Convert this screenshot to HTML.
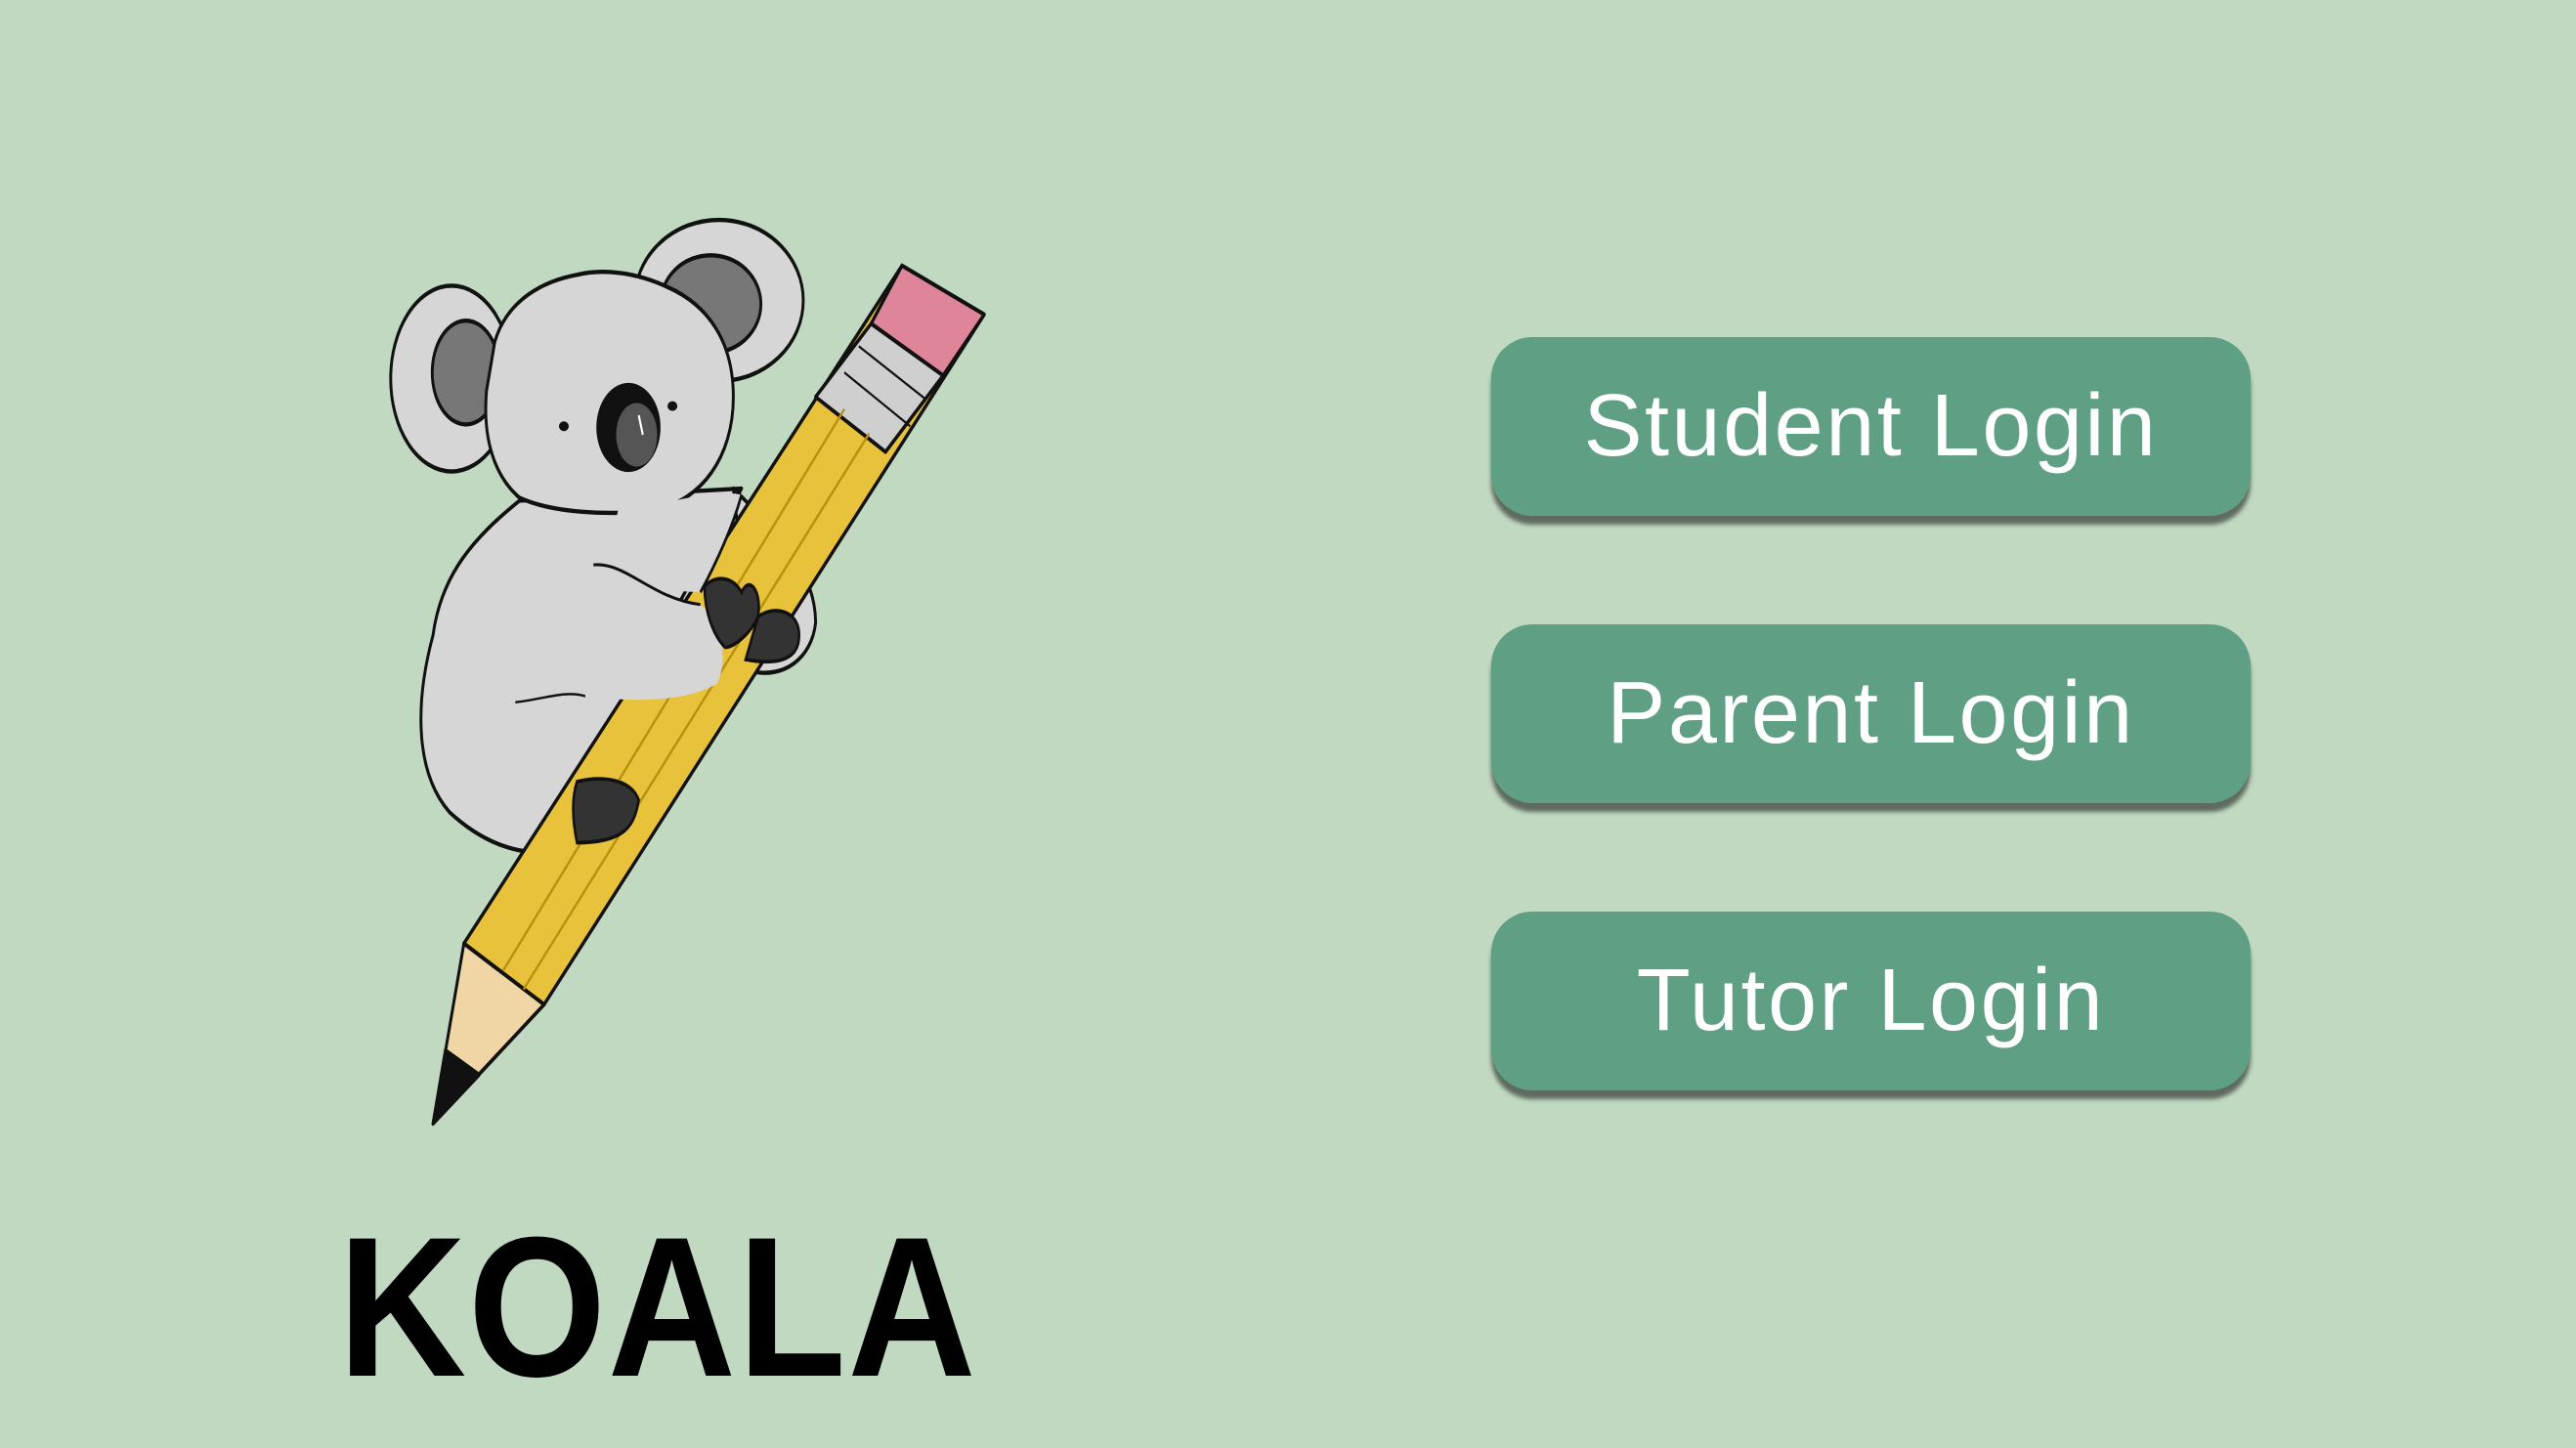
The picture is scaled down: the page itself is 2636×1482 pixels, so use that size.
<!DOCTYPE html>
<html><head><meta charset="utf-8"><style>
html,body{margin:0;padding:0}
body{width:2636px;height:1482px;background:#c0d9c0;position:relative;overflow:hidden;font-family:"Liberation Sans",sans-serif}
.btn{position:absolute;left:1526px;width:777px;height:183px;background:#5f9f84;border-radius:42px;box-shadow:0 9px 4px #5f6b60;color:#fff;font-size:90px;display:flex;align-items:center;justify-content:center;letter-spacing:2.5px}
.logo{position:absolute;left:346px;top:1236px;font-size:204px;font-weight:bold;color:#000;line-height:1;transform:scaleX(0.89);transform-origin:left top;letter-spacing:2px}
svg{position:absolute;left:380px;top:200px}
</style></head><body>
<svg width="660" height="980" viewBox="0 0 1568 1568" preserveAspectRatio="none">
<g stroke="#111" stroke-width="7" stroke-linejoin="round">
<ellipse cx="195" cy="300" rx="148" ry="152" fill="#d6d6d6"/>
<ellipse cx="230" cy="290" rx="82" ry="85" fill="#777"/>
<ellipse cx="845" cy="172" rx="205" ry="132" fill="#d6d6d6"/>
<ellipse cx="825" cy="178" rx="122" ry="80" fill="#777"/>
<path d="M360 500 C250 560 170 620 150 720 C110 820 100 940 190 1010 C270 1060 360 1085 480 1075 L560 900 L900 480 Z" fill="#d6d6d6"/>
<path d="M880 480 C1000 560 1080 620 1080 700 C1070 760 1000 790 930 780 Z" fill="#d6d6d6"/>
<path d="M300 240 C330 170 420 140 500 130 C560 120 640 125 720 150 C820 180 880 240 880 330 C880 430 800 500 690 515 C580 525 440 520 360 495 C300 460 270 400 280 320 Z" fill="#d6d6d6"/>
<path d="M1290 115 L1490 195 L420 1325 L225 1225 Z" fill="#e8c23a"/>
<path d="M1290 115 L1490 195 L1390 295 L1215 210 Z" fill="#de8599"/>
<path d="M1215 210 L1390 295 L1250 420 L1080 330 Z" fill="#cfcfcf"/>
<path d="M1185 247 L1350 335 M1150 290 L1310 378" fill="none" stroke-width="4"/>
<path d="M225 1225 L420 1325 L150 1520 Z" fill="#f0d6a4"/>
<path d="M180 1400 L262 1440 L150 1520 Z" fill="#111"/>
</g>
<g stroke="#b88f10" stroke-width="5" fill="none">
<path d="M1150 350 L320 1270"/><path d="M1210 390 L370 1300"/>
</g>
<path d="M600 515 C700 510 820 480 900 490 C880 540 840 600 800 650 L560 640 Z" fill="#d6d6d6"/>
<path d="M900 490 C880 540 840 600 800 650" fill="none" stroke="#111" stroke-width="6"/>
<path d="M540 605 C620 600 680 660 800 670 C850 700 870 760 840 800 C760 830 640 830 520 820 C430 810 410 760 410 750 L420 600 Z" fill="#d6d6d6"/>
<path d="M540 605 C620 600 680 660 800 670" fill="none" stroke="#111" stroke-width="5"/>
<path d="M350 830 C420 825 470 810 520 820" fill="none" stroke="#111" stroke-width="4"/>
<g stroke="#111" stroke-width="6">
<path d="M810 640 C840 620 880 625 900 650 C920 620 950 650 940 690 C920 720 880 740 860 740 C830 720 810 680 810 640 Z" fill="#333"/>
<path d="M940 690 C980 670 1040 680 1040 720 C1040 760 990 770 910 760 Z" fill="#333"/>
<path d="M500 960 C560 950 630 955 650 990 C640 1030 620 1060 500 1060 C485 1010 490 980 500 960 Z" fill="#333"/>
<ellipse cx="625" cy="380" rx="75" ry="70" fill="#111"/>
</g>
<ellipse cx="645" cy="392" rx="50" ry="52" fill="#555"/>
<path d="M650 360 L660 392" stroke="#fff" stroke-width="5"/>
<ellipse cx="468" cy="378" rx="12" ry="8" fill="#111"/>
<ellipse cx="732" cy="345" rx="12" ry="8" fill="#111"/>
</svg>
<div class="btn" style="top:345px">Student Login</div>
<div class="btn" style="top:639px">Parent Login</div>
<div class="btn" style="top:933px">Tutor Login</div>
<div class="logo">KOALA</div>
</body></html>
